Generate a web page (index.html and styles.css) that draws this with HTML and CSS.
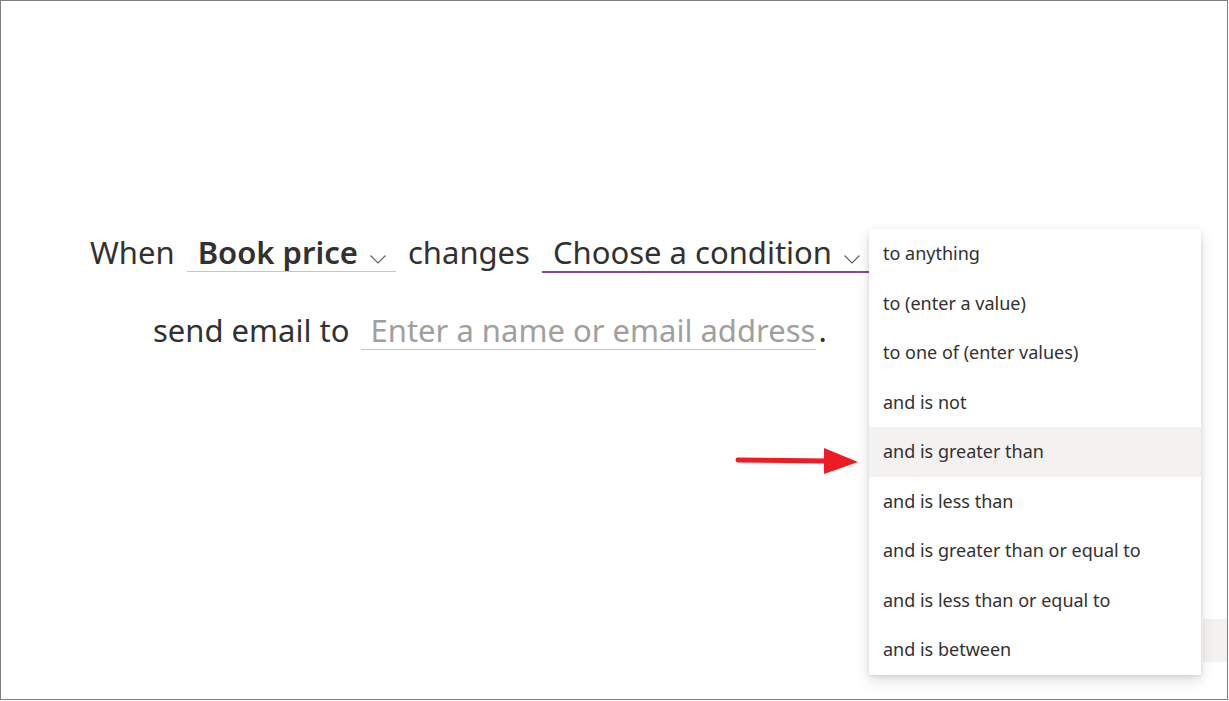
FILE: index.html
```html
<!DOCTYPE html>
<html lang="en">
<head>
  <meta charset="UTF-8" />
  <title>Create a rule</title>
  <link rel="stylesheet" href="styles.css">
</head>
<body>
  <div class="frame">
    <main class="rule">
      <div class="rule-row row-when">
        <span class="word">When</span>
        <span class="field field-column">
          <span class="field-text">Book price</span>
          <svg class="chevron" width="16" height="9" viewBox="0 0 16 9"><polyline points="0.5,0.5 8,8 15.5,0.5" fill="none" stroke="#605e5c" stroke-width="1.1"/></svg>
        </span>
        <span class="word">changes</span>
        <span class="field field-active">
          <span class="field-text">Choose a condition</span>
          <svg class="chevron" width="16" height="9" viewBox="0 0 16 9"><polyline points="0.5,0.5 8,8 15.5,0.5" fill="none" stroke="#605e5c" stroke-width="1.1"/></svg>
        </span>
      </div>
      <div class="rule-row row-then">
        <span class="word">send email to</span>
        <span class="field field-input">
          <span class="placeholder">Enter a name or email address</span>
        </span>
        <span class="period">.</span>
      </div>
    </main>

    <div class="footer-btn"></div>

    <svg class="pointer" width="130" height="36" viewBox="0 0 130 36">
      <line x1="4" y1="15" x2="94" y2="16" stroke="#ed1c24" stroke-width="5" stroke-linecap="round"/>
      <polygon points="90,3 124,17 90,29" fill="#ed1c24"/>
    </svg>

    <ul class="menu">
      <li>to anything</li>
      <li>to (enter a value)</li>
      <li>to one of (enter values)</li>
      <li>and is not</li>
      <li class="hover">and is greater than</li>
      <li>and is less than</li>
      <li>and is greater than or equal to</li>
      <li>and is less than or equal to</li>
      <li>and is between</li>
    </ul>
  </div>
</body>
</html>
```

FILE: styles.css
```css
body {
  margin: 0;
  background: #fff;
  font-family: 'Noto Sans', 'Open Sans', sans-serif;
  color: #323130;
}

.frame {
  position: relative;
  width: 1228px;
  height: 700px;
  box-sizing: border-box;
  border: 1px solid #7f7f7f;
  overflow: hidden;
}

/* rule sentence */
.rule {
  padding-top: 233px;
  display: flex;
  flex-direction: column;
  gap: 40px;
}

.rule-row {
  display: flex;
  align-items: baseline;
  gap: 12px;
  font-size: 31px;
  line-height: 1.2;
}

.row-when {
  padding-left: 89px;
}

.row-then {
  padding-left: 152px;
}

.field {
  display: inline-flex;
  align-items: baseline;
  padding: 0 10px 0 11px;
  border-bottom: 1px solid #c8c6c4;
}

.field-column .field-text {
  font-weight: 600;
}

.field-active {
  border-bottom: 2px solid #8e4a8e;
  margin-bottom: -1px;
}

.chevron {
  margin-left: 12px;
  margin-bottom: 6px;
}

.field-input {
  width: 438px;
  padding: 0 8px 0 9px;
}

.placeholder {
  color: #a19f9d;
  white-space: nowrap;
}

.period {
  margin-left: -10px;
}

/* partially hidden footer button */
.footer-btn {
  position: absolute;
  left: 1202px;
  top: 618px;
  width: 80px;
  height: 43px;
  background: #f3f2f1;
  border-radius: 2px;
}

.pointer {
  position: absolute;
  left: 733px;
  top: 444px;
}

/* condition dropdown */
.menu {
  position: absolute;
  left: 868px;
  top: 228px;
  width: 332px;
  margin: 0;
  padding: 0;
  list-style: none;
  background: #fff;
  border-radius: 2px;
  box-shadow: 0 6px 14px rgba(0, 0, 0, 0.13), 0 1px 4px rgba(0, 0, 0, 0.11);
}

.menu li {
  height: 49.5px;
  line-height: 49.5px;
  padding: 0 14px;
  font-size: 18px;
  white-space: nowrap;
}

.menu li.hover {
  background: #f3f2f1;
}
```
